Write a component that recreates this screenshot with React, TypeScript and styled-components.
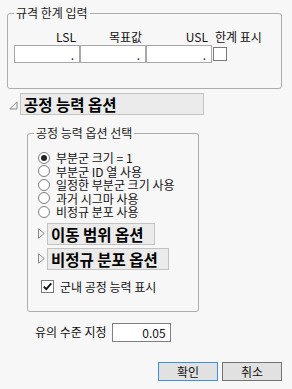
import React from "react";
import styled, { createGlobalStyle } from "styled-components";

const Global = createGlobalStyle`
  html, body { margin: 0; padding: 0; background: #f7f7f7; }
  body {
    font-family: "Noto Sans CJK KR", "Noto Sans", sans-serif;
    font-size: 12px;
    color: #111;
  }
  * { box-sizing: border-box; }
`;

const Page = styled.div`
  width: 292px;
  height: 389px;
  padding-top: 5px;
  background: #f7f7f7;
  overflow: hidden;
`;

const Group = styled.fieldset<{ $ml: number; $w: number; $pb: number }>`
  margin: 0 0 0 ${(p) => p.$ml}px;
  width: ${(p) => p.$w}px;
  min-inline-size: 0;
  border: 1px solid #adadad;
  border-radius: 3px;
  padding: 8px 8px ${(p) => p.$pb}px 8px;
`;

const Legend = styled.legend`
  padding: 0 2px;
  margin-left: -2px;
  line-height: 16px;
  font-size: 12px;
  color: #1a1a1a;
`;

const LimitGrid = styled.div`
  display: grid;
  grid-template-columns: 66px 66px 66px auto;
  grid-template-rows: 16px 18px;
  margin-left: -2px;
`;

const ColLabel = styled.div<{ $left?: boolean }>`
  line-height: 16px;
  text-align: ${(p) => (p.$left ? "left" : "right")};
  padding: ${(p) => (p.$left ? "0 0 0 3px" : "0 4px 0 0")};
  white-space: nowrap;
  color: #111;
`;

const ValueInput = styled.input`
  width: 100%;
  height: 18px;
  margin: 0;
  border: 1px solid #a8a8a8;
  background: #fff;
  font-family: "Noto Sans CJK KR", "Noto Sans", sans-serif;
  font-size: 12px;
  text-align: right;
  padding: 0 5px 0 2px;
  color: #1a1a6a;
  outline: none;
`;

const CheckCell = styled.div`
  display: flex;
  align-items: center;
  padding-left: 1px;
`;

const CheckBox = styled.span<{ $size: number }>`
  display: inline-flex;
  align-items: center;
  justify-content: center;
  width: ${(p) => p.$size}px;
  height: ${(p) => p.$size}px;
  border: 1px solid #7a7a7a;
  background: #fff;
  flex: none;
`;

const OutlineRow = styled.div<{ $mt: number; $ml: number }>`
  display: flex;
  align-items: center;
  margin-top: ${(p) => p.$mt}px;
  margin-left: ${(p) => p.$ml}px;
  gap: 2px;
`;

const TriIcon = styled.svg`
  flex: none;
  display: block;
`;

const OutlineTitle = styled.div<{ $w?: number }>`
  height: 22px;
  ${(p) => (p.$w ? `width: ${p.$w}px;` : "")}
  background: #ebebeb;
  border: 1px solid #c3c3c3;
  font-weight: 700;
  font-size: 15.5px;
  line-height: 20px;
  padding: 0 10px 0 3px;
  color: #000;
  white-space: nowrap;
`;

const OutlineBody = styled.div`
  padding-left: 27px;
  margin-top: 10px;
`;

const RadioList = styled.div`
  display: flex;
  flex-direction: column;
  margin-top: 2px;
`;

const RadioRow = styled.div`
  display: flex;
  align-items: center;
  height: 13.5px;
  padding-left: 2px;
  white-space: nowrap;
`;

const RadioCircle = styled.span<{ $on?: boolean }>`
  width: 12px;
  height: 12px;
  border-radius: 50%;
  border: 1px solid #7d7d7d;
  background: #fff;
  flex: none;
  display: flex;
  align-items: center;
  justify-content: center;
  &::after {
    content: "";
    width: 6px;
    height: 6px;
    border-radius: 50%;
    background: ${(p) => (p.$on ? "#222" : "transparent")};
  }
`;

const RowText = styled.span<{ $gap: number }>`
  display: block;
  margin-left: ${(p) => p.$gap}px;
  line-height: 13.5px;
  height: 13.5px;
  color: #111;
`;

const CheckRow = styled.div`
  display: flex;
  align-items: center;
  height: 16px;
  margin-top: 9px;
  padding-left: 5px;
`;

const AlphaRow = styled.div`
  display: flex;
  align-items: center;
  margin: 11px 0 0 8px;
  gap: 5px;
`;

const AlphaLabel = styled.span`
  line-height: 16px;
  color: #111;
`;

const AlphaInput = styled(ValueInput)`
  width: 59px;
  height: 19px;
  border-color: #7f7f7f;
  color: #111;
  padding-right: 4px;
`;

const ButtonRow = styled.div`
  display: flex;
  justify-content: flex-end;
  gap: 4px;
  margin-top: 20px;
  padding-right: 10px;
`;

const Button = styled.button<{ $primary?: boolean }>`
  width: 60px;
  height: 19px;
  margin: 0;
  padding: 0;
  background: #e1e1e1;
  border: 1px solid ${(p) => (p.$primary ? "#3c8fe3" : "#747474")};
  font-family: "Noto Sans CJK KR", "Noto Sans", sans-serif;
  font-size: 12px;
  line-height: 17px;
  color: #111;
`;

const OpenTriangle = () => (
  <TriIcon width="9" height="9" viewBox="0 0 9 9" style={{ marginTop: 3 }}>
    <path d="M8 0.8 L8 8 L0.8 8 Z" fill="#f2f2f2" stroke="#8a8a8a" strokeWidth="1" />
  </TriIcon>
);

const ClosedTriangle = () => (
  <TriIcon width="7" height="11" viewBox="0 0 7 11">
    <path d="M0.5 0.8 L6.3 5.5 L0.5 10.2 Z" fill="#f2f2f2" stroke="#8a8a8a" strokeWidth="1" />
  </TriIcon>
);

const CheckMark = () => (
  <svg width="11" height="11" viewBox="0 0 11 11">
    <path d="M1.8 5.6 L4.3 8.2 L9.3 2.3" fill="none" stroke="#111" strokeWidth="1.8" />
  </svg>
);

const radios = [
  "부분군 크기 = 1",
  "부분군 ID 열 사용",
  "일정한 부분군 크기 사용",
  "과거 시그마 사용",
  "비정규 분포 사용",
];

export default function App() {
  return (
    <Page>
      <Global />
      <Group $ml={7} $w={275} $pb={25}>
        <Legend>규격 한계 입력</Legend>
        <LimitGrid>
          <ColLabel>LSL</ColLabel>
          <ColLabel>목표값</ColLabel>
          <ColLabel>USL</ColLabel>
          <ColLabel $left>한계 표시</ColLabel>
          <ValueInput readOnly value="." />
          <ValueInput readOnly value="." />
          <ValueInput readOnly value="." />
          <CheckCell>
            <CheckBox $size={14} />
          </CheckCell>
        </LimitGrid>
      </Group>

      <OutlineRow $mt={4} $ml={9}>
        <OpenTriangle />
        <OutlineTitle $w={184}>공정 능력 옵션</OutlineTitle>
      </OutlineRow>

      <OutlineBody>
        <Group $ml={0} $w={172} $pb={16}>
          <Legend>공정 능력 옵션 선택</Legend>
          <RadioList>
            {radios.map((r, i) => (
              <RadioRow key={r}>
                <RadioCircle $on={i === 0} />
                <RowText $gap={6}>{r}</RowText>
              </RadioRow>
            ))}
          </RadioList>
          <OutlineRow $mt={4} $ml={2}>
            <ClosedTriangle />
            <OutlineTitle>이동 범위 옵션</OutlineTitle>
          </OutlineRow>
          <OutlineRow $mt={3} $ml={2}>
            <ClosedTriangle />
            <OutlineTitle>비정규 분포 옵션</OutlineTitle>
          </OutlineRow>
          <CheckRow>
            <CheckBox $size={13}>
              <CheckMark />
            </CheckBox>
            <RowText $gap={6}>군내 공정 능력 표시</RowText>
          </CheckRow>
        </Group>

        <AlphaRow>
          <AlphaLabel>유의 수준 지정</AlphaLabel>
          <AlphaInput readOnly value="0.05" />
        </AlphaRow>
      </OutlineBody>

      <ButtonRow>
        <Button $primary>확인</Button>
        <Button>취소</Button>
      </ButtonRow>
    </Page>
  );
}
